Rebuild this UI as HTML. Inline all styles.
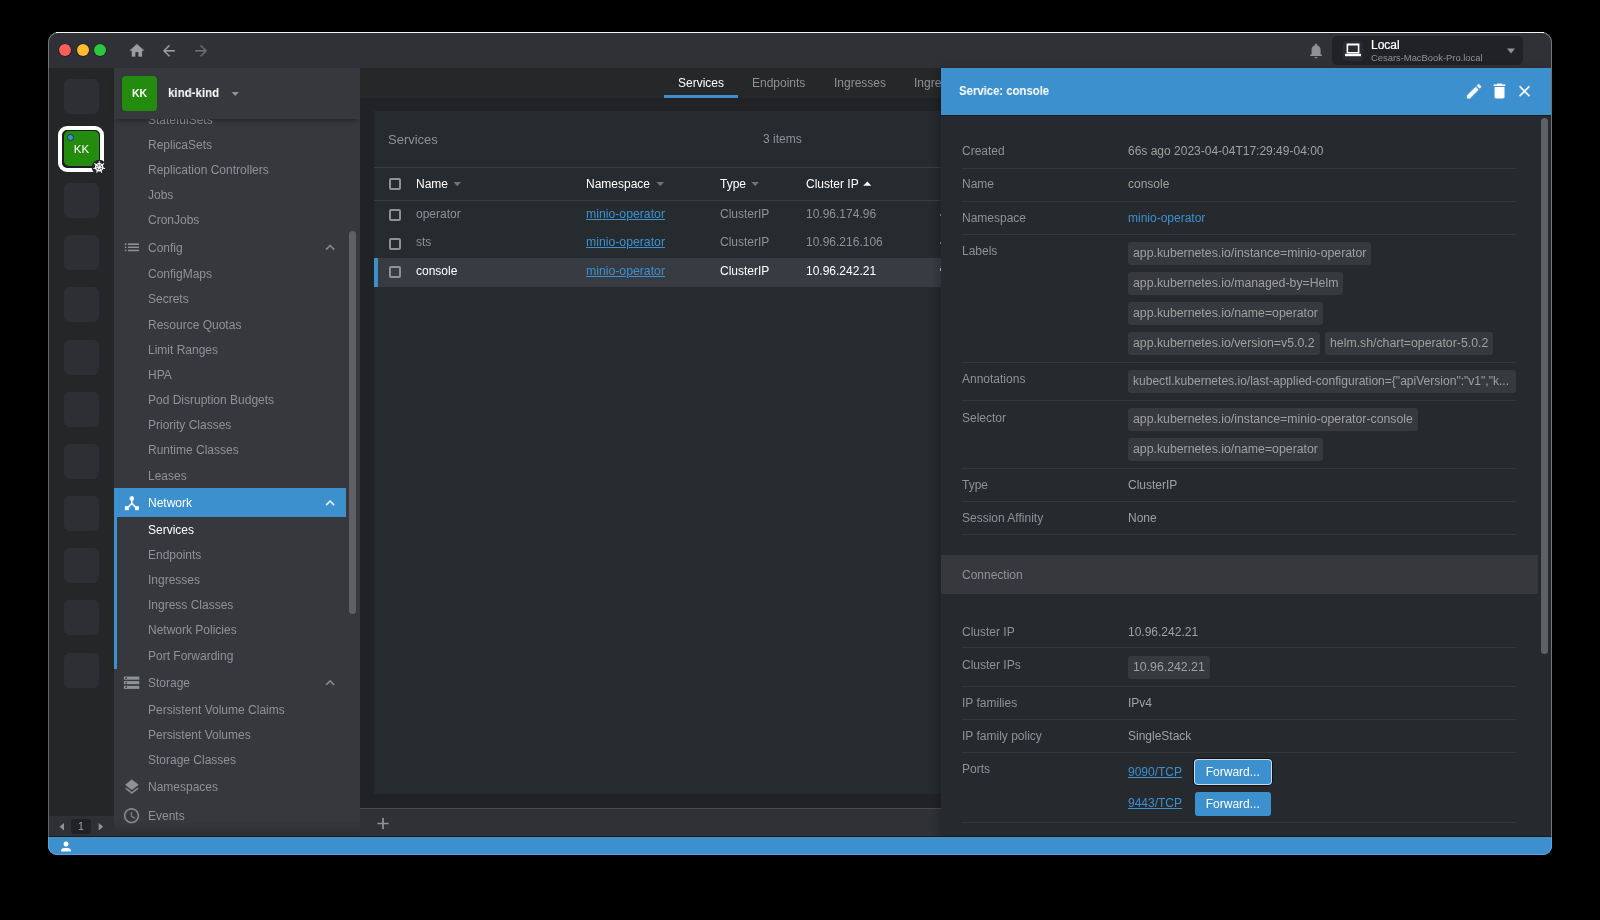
<!DOCTYPE html>
<html><head><meta charset="utf-8">
<style>
*{box-sizing:border-box;margin:0;padding:0}
html,body{width:1600px;height:920px;background:#000;overflow:hidden;font-family:"Liberation Sans",sans-serif;font-size:12px}
.abs{position:absolute}
.t{position:absolute;white-space:nowrap;line-height:14px}
#win{position:absolute;left:48px;top:32px;width:1504px;height:823px;border-radius:10px;overflow:hidden;background:#303136;border:1px solid #5f6166}
#topline{position:absolute;left:56px;top:32px;width:1488px;height:1px;background:#f4f4f4}
/* titlebar */
.tl{position:absolute;top:44px;width:12px;height:12px;border-radius:50%;box-shadow:0 0 0 0.6px rgba(0,20,30,0.6)}
/* hotbar */
#hotbar{position:absolute;left:48px;top:68px;width:66px;height:769px;background:#252628}
.hb{position:absolute;left:64px;width:35px;height:35px;border-radius:6px;background:#2e2f34}
/* sidebar */
#sidebar{position:absolute;left:114px;top:68px;width:246px;height:769px;background:#37383d;overflow:hidden}
.si{position:absolute;left:148px;color:#8e9297;font-size:12px;white-space:nowrap;line-height:14px}
.wh{color:#fff}
.sh{position:absolute;left:148px;color:#8e9297;font-size:12px;white-space:nowrap;line-height:14px}
/* main */
#tabs{position:absolute;left:360px;top:68px;width:600px;height:30px;background:#252729}
#mainbg{position:absolute;left:360px;top:98px;width:600px;height:710px;background:#212225}
#panel{position:absolute;left:374px;top:111px;width:600px;height:683px;background:#262b2f}
#dock{position:absolute;left:360px;top:808px;width:600px;height:29px;background:#303136;border-top:1px solid #46494e}
.tab{position:absolute;top:76px;color:#8e9297;font-size:12px;white-space:nowrap}
.cell{position:absolute;font-size:12px;white-space:nowrap;color:#8e9297;line-height:14px}
.hcell{position:absolute;font-size:12px;white-space:nowrap;color:#fff;line-height:14px}
.cb{position:absolute;left:389px;width:12px;height:12px;border:2px solid #8e9297;border-radius:2px}
.link{color:#3d90ce;text-decoration:underline}
/* drawer */
#drawer{position:absolute;left:941px;top:68px;width:610px;height:769px;background:#262a2e;box-shadow:-4px 0 6px rgba(0,0,0,0.18)}
#dhead{position:absolute;left:941px;top:68px;width:610px;height:47px;background:#3d90ce}
.dl{position:absolute;left:962px;color:#8e9297;font-size:12px;white-space:nowrap;line-height:14px}
.dv{position:absolute;left:1128px;color:#a0a0a0;font-size:12px;white-space:nowrap;line-height:14px}
.sep{position:absolute;left:962px;width:554px;height:1px;background:#30343a}
.chip{position:absolute;height:23px;line-height:23px;padding:0 5px;background:#36393e;border-radius:3px;color:#a0a0a0;font-size:12.3px;white-space:nowrap}
.btn{position:absolute;left:1195px;width:75.5px;height:24px;background:#3d90ce;color:#fff;border-radius:3px;font-size:12px;line-height:24px;text-align:center}
#status{position:absolute;left:48px;top:837px;width:1504px;height:18px;background:#3d90ce;border-radius:0 0 9px 9px}
body *{will-change:transform}
</style></head>
<body>
<div id="win"></div>
<div id="topline"></div>

<!-- traffic lights -->
<div class="tl" style="left:59px;background:#fe5f57"></div>
<div class="tl" style="left:77px;background:#febc2e"></div>
<div class="tl" style="left:94px;background:#28c840"></div>

<div class="abs" style="left:1332px;top:36px;width:191px;height:28.5px;border-radius:5px;background:#212226"></div>
<div class="abs" style="left:1343px;top:40.5px;width:20px;height:20px;border-radius:4px;background:#2a2b30"></div>
<div class="t" style="left:1370.5px;top:37.84px;font-size:12px;color:#fff;font-weight:500;-webkit-text-stroke:0.2px #fff;">Local</div>
<div class="t" style="left:1370.5px;top:51.14px;font-size:9.4px;color:#8e9297;">Cesars-MacBook-Pro.local</div>
<svg class="abs" style="left:1343px;top:40px" width="20" height="20" viewBox="0 0 20 20"><path d="M3.6 3.6h12.8v10H3.6z M5.2 5.4v6.6h9.6V5.4z" fill="#fff" fill-rule="evenodd"/><rect x="2" y="13.8" width="16" height="2.4" fill="#fff"/></svg>
<div id="hotbar"></div>
<div id="sidebar"></div>

<!-- hotbar items -->
<div class="hb" style="top:78.80px"></div>
<div class="hb" style="top:183.12px"></div>
<div class="hb" style="top:235.28px"></div>
<div class="hb" style="top:287.44px"></div>
<div class="hb" style="top:339.60px"></div>
<div class="hb" style="top:391.76px"></div>
<div class="hb" style="top:443.92px"></div>
<div class="hb" style="top:496.08px"></div>
<div class="hb" style="top:548.24px"></div>
<div class="hb" style="top:600.40px"></div>
<div class="hb" style="top:652.56px"></div>
<div class="abs" style="left:58px;top:125.5px;width:46px;height:46px;border-radius:9px;border:4px solid #fff;background:#1c1d20"></div>
<div class="abs" style="left:64px;top:131px;width:35px;height:35px;border-radius:5px;background:#238c0e;color:#fff;font-size:11.5px;line-height:35px;text-align:center;padding-top:1px">KK</div>
<div class="abs" style="left:66.5px;top:134px;width:7px;height:7px;border-radius:50%;background:#3d90ce;border:1px solid #1d3a50"></div>
<!-- pager -->
<div class="abs" style="left:49px;top:816px;width:65px;height:21px;background:#2f3035"></div>
<div class="abs" style="left:71px;top:819px;width:20px;height:15px;border-radius:3px;background:#212226;color:#a0a4a8;font-size:10.5px;line-height:15px;text-align:center">1</div>

<!-- sidebar items -->
<div id="sbitems">
<div class="abs" style="left:114px;top:488px;width:232px;height:29px;background:#3d90ce"></div>
<div class="abs" style="left:114px;top:517px;width:3px;height:152px;background:#3d90ce"></div>
<div class="si" style="top:112.6px">StatefulSets</div>
<div class="si" style="top:137.8px">ReplicaSets</div>
<div class="si" style="top:163.0px">Replication Controllers</div>
<div class="si" style="top:188.2px">Jobs</div>
<div class="si" style="top:213.4px">CronJobs</div>
<div class="si" style="top:240.6px">Config</div>
<div class="si" style="top:267.2px">ConfigMaps</div>
<div class="si" style="top:292.3px">Secrets</div>
<div class="si" style="top:317.5px">Resource Quotas</div>
<div class="si" style="top:342.7px">Limit Ranges</div>
<div class="si" style="top:367.9px">HPA</div>
<div class="si" style="top:393.1px">Pod Disruption Budgets</div>
<div class="si" style="top:418.2px">Priority Classes</div>
<div class="si" style="top:443.4px">Runtime Classes</div>
<div class="si" style="top:468.6px">Leases</div>
<div class="si wh" style="top:495.8px">Network</div>
<div class="si wh" style="top:522.6px">Services</div>
<div class="si" style="top:547.8px">Endpoints</div>
<div class="si" style="top:573.0px">Ingresses</div>
<div class="si" style="top:598.1px">Ingress Classes</div>
<div class="si" style="top:623.3px">Network Policies</div>
<div class="si" style="top:648.5px">Port Forwarding</div>
<div class="si" style="top:675.8px">Storage</div>
<div class="si" style="top:702.5px">Persistent Volume Claims</div>
<div class="si" style="top:727.7px">Persistent Volumes</div>
<div class="si" style="top:752.8px">Storage Classes</div>
<div class="si" style="top:780.0px">Namespaces</div>
<div class="si" style="top:808.6px">Events</div>
<div class="abs" style="left:349px;top:231px;width:7px;height:383px;border-radius:4px;background:#5f6064"></div>
</div>
<div class="abs" style="left:114px;top:822px;width:246px;height:14px;background:linear-gradient(rgba(0,0,0,0),rgba(0,0,0,0.18))"></div>
<!-- sidebar header -->
<div class="abs" style="left:114px;top:68px;width:246px;height:51px;background:#37383d;box-shadow:0 4px 5px -2px rgba(0,0,0,0.3)"></div>
<div class="abs" style="left:122px;top:76px;width:35px;height:35px;border-radius:4px;background:#238c0e;color:#fff;font-weight:bold;font-size:10.5px;line-height:35px;text-align:center">KK</div>
<div class="abs" style="left:167.5px;top:86px;color:#fff;font-weight:bold;font-size:12.8px;line-height:14px;transform:scaleX(0.9);transform-origin:0 0">kind-kind</div>
<div id="tabs"></div>
<div id="mainbg"></div>
<div id="panel"></div>
<div id="dock"></div>
<div class="abs" style="left:664px;top:94.5px;width:74px;height:3px;background:#3d90ce"></div>
<div class="t" style="left:678.4px;top:75.64px;font-size:12px;color:#fff;">Services</div>
<div class="t" style="left:751.9px;top:75.64px;font-size:12px;color:#8e9297;">Endpoints</div>
<div class="t" style="left:834px;top:75.64px;font-size:12px;color:#8e9297;">Ingresses</div>
<div class="t" style="left:914px;top:75.64px;font-size:12px;color:#8e9297;">Ingress Classes</div>
<div class="t" style="left:388px;top:132.50px;font-size:13px;color:#8e9297;">Services</div>
<div class="t" style="left:762.8px;top:131.94px;font-size:12px;color:#8e9297;">3 items</div>
<div class="abs" style="left:374px;top:167px;width:600px;height:1px;background:#383b40"></div>
<div class="abs" style="left:374px;top:200px;width:600px;height:1px;background:#383b40"></div>
<div class="cb" style="top:178px"></div>
<div class="t" style="left:415.6px;top:176.64px;font-size:12px;color:#fff;">Name</div>
<div class="t" style="left:586px;top:176.64px;font-size:12px;color:#fff;">Namespace</div>
<div class="t" style="left:720px;top:176.64px;font-size:12px;color:#fff;">Type</div>
<div class="t" style="left:805.7px;top:176.64px;font-size:12px;color:#fff;">Cluster IP</div>
<div class="abs" style="left:374px;top:258px;width:600px;height:28.5px;background:#383c42"></div>
<div class="abs" style="left:374px;top:258px;width:3.5px;height:28.5px;background:#3d90ce"></div>
<div class="cb" style="top:208.9px"></div>
<div class="t" style="left:415.6px;top:206.74px;font-size:12px;color:#8e9297;">operator</div>
<div class="t" style="left:586px;top:206.66px;font-size:12.25px;color:#3d90ce;text-decoration:underline;">minio-operator</div>
<div class="t" style="left:720px;top:206.74px;font-size:12px;color:#8e9297;">ClusterIP</div>
<div class="t" style="left:805.7px;top:206.74px;font-size:12px;color:#8e9297;">10.96.174.96</div>
<div class="cb" style="top:237.5px"></div>
<div class="t" style="left:415.6px;top:235.34px;font-size:12px;color:#8e9297;">sts</div>
<div class="t" style="left:586px;top:235.26px;font-size:12.25px;color:#3d90ce;text-decoration:underline;">minio-operator</div>
<div class="t" style="left:720px;top:235.34px;font-size:12px;color:#8e9297;">ClusterIP</div>
<div class="t" style="left:805.7px;top:235.34px;font-size:12px;color:#8e9297;">10.96.216.106</div>
<div class="cb" style="top:266.1px"></div>
<div class="t" style="left:415.6px;top:263.94px;font-size:12px;color:#fff;">console</div>
<div class="t" style="left:586px;top:263.86px;font-size:12.25px;color:#3d90ce;text-decoration:underline;">minio-operator</div>
<div class="t" style="left:720px;top:263.94px;font-size:12px;color:#fff;">ClusterIP</div>
<div class="t" style="left:805.7px;top:263.94px;font-size:12px;color:#fff;">10.96.242.21</div>
<div class="abs" style="left:939.5px;top:213.5px;width:1.5px;height:2px;background:#8e9297"></div>
<div class="abs" style="left:939.5px;top:242px;width:1.5px;height:2px;background:#8e9297"></div>
<div class="abs" style="left:939.5px;top:267.5px;width:1.5px;height:3px;background:#ccc"></div>
<div id="drawer"></div>
<div id="dhead"></div>
<div class="abs" style="left:941px;top:115px;width:610px;height:1px;background:#1b1a17"></div>
<div class="t" style="left:958.5px;top:84.2px;font-size:12.4px;color:#fff;font-weight:bold;transform:scaleX(0.915);transform-origin:0 0">Service: console</div>
<div class="t" style="left:961.7px;top:144.44px;font-size:12px;color:#8e9297;">Created</div>
<div class="t" style="left:1128.3px;top:144.44px;font-size:12px;color:#a0a0a0;">66s ago 2023-04-04T17:29:49-04:00</div>
<div class="abs" style="left:962px;top:168px;width:554px;height:1px;background:#33373c"></div>
<div class="t" style="left:961.7px;top:177.24px;font-size:12px;color:#8e9297;">Name</div>
<div class="t" style="left:1128.3px;top:177.24px;font-size:12px;color:#a0a0a0;">console</div>
<div class="abs" style="left:962px;top:201px;width:554px;height:1px;background:#33373c"></div>
<div class="t" style="left:961.7px;top:210.94px;font-size:12px;color:#8e9297;">Namespace</div>
<div class="t" style="left:1128.3px;top:210.94px;font-size:12px;color:#3d90ce;">minio-operator</div>
<div class="abs" style="left:962px;top:234px;width:554px;height:1px;background:#33373c"></div>
<div class="t" style="left:961.7px;top:243.94px;font-size:12px;color:#8e9297;">Labels</div>
<div class="chip" style="left:1128px;top:242px;">app.kubernetes.io/instance=minio-operator</div>
<div class="chip" style="left:1128px;top:272px;">app.kubernetes.io/managed-by=Helm</div>
<div class="chip" style="left:1128px;top:302px;">app.kubernetes.io/name=operator</div>
<div class="chip" style="left:1128px;top:332px;">app.kubernetes.io/version=v5.0.2</div>
<div class="chip" style="left:1325px;top:332px;">helm.sh/chart=operator-5.0.2</div>
<div class="abs" style="left:962px;top:362px;width:554px;height:1px;background:#33373c"></div>
<div class="t" style="left:961.7px;top:371.84px;font-size:12px;color:#8e9297;">Annotations</div>
<div class="chip" style="left:1128px;top:370px;width:388px;overflow:hidden;font-size:12.05px">kubectl.kubernetes.io/last-applied-configuration={"apiVersion":"v1","k...</div>
<div class="abs" style="left:962px;top:400px;width:554px;height:1px;background:#33373c"></div>
<div class="t" style="left:961.7px;top:410.54px;font-size:12px;color:#8e9297;">Selector</div>
<div class="chip" style="left:1128px;top:408px;">app.kubernetes.io/instance=minio-operator-console</div>
<div class="chip" style="left:1128px;top:438px;">app.kubernetes.io/name=operator</div>
<div class="abs" style="left:962px;top:468px;width:554px;height:1px;background:#33373c"></div>
<div class="t" style="left:961.7px;top:478.34px;font-size:12px;color:#8e9297;">Type</div>
<div class="t" style="left:1128.3px;top:478.34px;font-size:12px;color:#a0a0a0;">ClusterIP</div>
<div class="abs" style="left:962px;top:501px;width:554px;height:1px;background:#33373c"></div>
<div class="t" style="left:961.7px;top:510.84px;font-size:12px;color:#8e9297;">Session Affinity</div>
<div class="t" style="left:1128.3px;top:510.84px;font-size:12px;color:#a0a0a0;">None</div>
<div class="abs" style="left:962px;top:534px;width:554px;height:1px;background:#33373c"></div>
<div class="abs" style="left:941px;top:555px;width:597px;height:39px;background:#36383d"></div>
<div class="t" style="left:961.7px;top:567.74px;font-size:12px;color:#8e9297;">Connection</div>
<div class="t" style="left:961.7px;top:624.54px;font-size:12px;color:#8e9297;">Cluster IP</div>
<div class="t" style="left:1128.3px;top:624.54px;font-size:12px;color:#a0a0a0;">10.96.242.21</div>
<div class="abs" style="left:962px;top:647px;width:554px;height:1px;background:#33373c"></div>
<div class="t" style="left:961.7px;top:657.64px;font-size:12px;color:#8e9297;">Cluster IPs</div>
<div class="chip" style="left:1128px;top:655.5px;">10.96.242.21</div>
<div class="abs" style="left:962px;top:686px;width:554px;height:1px;background:#33373c"></div>
<div class="t" style="left:961.7px;top:696.24px;font-size:12px;color:#8e9297;">IP families</div>
<div class="t" style="left:1128.3px;top:696.24px;font-size:12px;color:#a0a0a0;">IPv4</div>
<div class="abs" style="left:962px;top:719px;width:554px;height:1px;background:#33373c"></div>
<div class="t" style="left:961.7px;top:729.34px;font-size:12px;color:#8e9297;">IP family policy</div>
<div class="t" style="left:1128.3px;top:729.34px;font-size:12px;color:#a0a0a0;">SingleStack</div>
<div class="abs" style="left:962px;top:752px;width:554px;height:1px;background:#33373c"></div>
<div class="t" style="left:961.7px;top:762.24px;font-size:12px;color:#8e9297;">Ports</div>
<div class="t" style="left:1128.3px;top:764.84px;font-size:12px;color:#3d90ce;text-decoration:underline;">9090/TCP</div>
<div class="t" style="left:1128.3px;top:796.14px;font-size:12px;color:#3d90ce;text-decoration:underline;">9443/TCP</div>
<div class="btn" style="top:760px;box-shadow:0 0 0 1px #c9def0, 0 0 0 2px #111">Forward...</div>
<div class="btn" style="top:791.5px">Forward...</div>
<div class="abs" style="left:962px;top:822px;width:554px;height:1px;background:#33373c"></div>
<div class="abs" style="left:1540.5px;top:118px;width:6.5px;height:536px;border-radius:4px;background:#5f6064"></div>
<div class="abs" style="left:48px;top:836px;width:1504px;height:1px;background:#1f1a12"></div>
<div id="status"></div>

<svg class="abs" style="left:0;top:0" width="1600" height="920" viewBox="0 0 1600 920">
<path transform="translate(127.90 41.67) scale(0.75)" d="M10 20v-6h4v6h5v-8h3L12 3 2 12h3v8z" fill="#9a9ca1" />
<path transform="translate(159.90 41.80) scale(0.75)" d="M20 11H7.83l5.59-5.59L12 4l-8 8 8 8 1.41-1.41L7.83 13H20v-2z" fill="#9a9ca1" />
<path transform="translate(192.10 41.80) scale(0.75)" d="M12 4l-1.41 1.41L16.17 11H4v2h12.17l-5.58 5.59L12 20l8-8z" fill="#6b6d72" />
<path transform="translate(1307.00 41.81) scale(0.75)" d="M12 22c1.1 0 2-.9 2-2h-4c0 1.1.89 2 2 2zm6-6v-5c0-3.07-1.64-5.64-4.5-6.32V4c0-.83-.67-1.5-1.5-1.5s-1.5.67-1.5 1.5v.68C7.63 5.36 6 7.92 6 11v5l-2 2v1h16v-1l-2-2z" fill="#8e9297" />
<path transform="translate(122.54 237.94) scale(0.78)" d="M3 13h2v-2H3v2zm0 4h2v-2H3v2zm0-8h2V7H3v2zm4 4h14v-2H7v2zm0 4h14v-2H7v2zM7 7v2h14V7H7z" fill="#8e9297" />
<path transform="translate(122.49 493.74) scale(0.78)" d="M17 16l-4-4V8.82C14.16 8.4 15 7.3 15 6c0-1.66-1.34-3-3-3S9 4.34 9 6c0 1.3.84 2.4 2 2.82V12l-4 4H3v5h5v-3.05l4-4.2 4 4.2V21h5v-5h-4z" fill="#fff" />
<path transform="translate(122.36 673.46) scale(0.77)" d="M2 20h20v-4H2v4zm2-3h2v2H4v-2zM2 4v4h20V4H2zm4 3H4V5h2v2zm-4 7h20v-4H2v4zm2-3h2v2H4v-2z" fill="#8e9297" />
<path transform="translate(122.73 777.91) scale(0.76)" d="M11.99 18.54l-7.37-5.73L3 14.07l9 7 9-7-1.63-1.27-7.38 5.74zM12 16l7.36-5.73L21 9l-9-7-9 7 1.63 1.27L12 16z" fill="#8e9297" />
<path transform="translate(122.38 806.53) scale(0.76)" d="M11.99 2C6.47 2 2 6.48 2 12s4.47 10 9.99 10C17.52 22 22 17.52 22 12S17.52 2 11.99 2zM12 20c-4.42 0-8-3.58-8-8s3.58-8 8-8 8 3.58 8 8-3.58 8-8 8zm.5-13H11v6l5.25 3.15.75-1.23-4.5-2.67z" fill="#8e9297" />
<path transform="translate(321.10 238.42) scale(0.75)" d="M12 8l-6 6 1.41 1.41L12 10.83l4.59 4.58L18 14z" fill="#8e9297" />
<path transform="translate(321.10 494.03) scale(0.75)" d="M12 8l-6 6 1.41 1.41L12 10.83l4.59 4.58L18 14z" fill="#fff" />
<path transform="translate(321.10 673.83) scale(0.75)" d="M12 8l-6 6 1.41 1.41L12 10.83l4.59 4.58L18 14z" fill="#8e9297" />
<path transform="translate(1464.50 81.70) scale(0.8)" d="M3 17.25V21h3.75L17.81 9.94l-3.75-3.75L3 17.25zM20.71 7.04c.39-.39.39-1.02 0-1.41l-2.34-2.34c-.39-.39-1.02-.39-1.41 0l-1.83 1.83 3.75 3.75 1.83-1.83z" fill="#fff" />
<path transform="translate(1489.54 81.04) scale(0.83)" d="M6 19c0 1.1.9 2 2 2h8c1.1 0 2-.9 2-2V7H6v12zM19 4h-3.5l-1-1h-5l-1 1H5v2h14V4z" fill="#fff" />
<path transform="translate(1515.02 81.72) scale(0.79)" d="M19 6.41L17.59 5 12 10.59 6.41 5 5 6.41 10.59 12 5 17.59 6.41 19 12 13.41 17.59 19 19 17.59 13.41 12z" fill="#fff" />
<path transform="translate(58.56 839.06) scale(0.62)" d="M12 12c2.21 0 4-1.79 4-4s-1.79-4-4-4-4 1.79-4 4 1.79 4 4 4zm0 2c-2.67 0-8 1.34-8 4v2h16v-2c0-2.66-5.33-4-8-4z" fill="#fff" />
<path transform="translate(373.40 813.90) scale(0.8)" d="M19 13h-6v6h-2v-6H5v-2h6V5h2v6h6v2z" fill="#8e9297" />
<polygon points="231.5,92 239,92 235.25,96" fill="#8e9297"/>
<polygon points="1507,48.5 1515,48.5 1511,53.5" fill="#8e9297"/>
<polygon points="64,823 64,830.5 59.5,826.75" fill="#8e9297"/>
<polygon points="98.7,823 98.7,830.5 103.2,826.75" fill="#8e9297"/>
<polygon points="453.5,182 461,182 457.25,186.2" fill="#6e7176"/>
<polygon points="656.5,182 664,182 660.25,186.2" fill="#6e7176"/>
<polygon points="751.4,182 758.9,182 755.15,186.2" fill="#6e7176"/>
<polygon points="863.2,185.8 871.3,185.8 867.25,181.6" fill="#fff"/>
<circle cx="99.2" cy="167.2" r="7.5" fill="#25262a"/>
<circle cx="99.2" cy="167.2" r="3.6" fill="none" stroke="#fff" stroke-width="1.4"/>
<circle cx="99.2" cy="167.2" r="1" fill="#fff"/>
<line x1="99.20" y1="166.00" x2="99.20" y2="161.60" stroke="#fff" stroke-width="1.1" stroke-linecap="round"/>
<line x1="100.14" y1="166.45" x2="103.58" y2="163.71" stroke="#fff" stroke-width="1.1" stroke-linecap="round"/>
<line x1="100.37" y1="167.47" x2="104.66" y2="168.45" stroke="#fff" stroke-width="1.1" stroke-linecap="round"/>
<line x1="99.72" y1="168.28" x2="101.63" y2="172.25" stroke="#fff" stroke-width="1.1" stroke-linecap="round"/>
<line x1="98.68" y1="168.28" x2="96.77" y2="172.25" stroke="#fff" stroke-width="1.1" stroke-linecap="round"/>
<line x1="98.03" y1="167.47" x2="93.74" y2="168.45" stroke="#fff" stroke-width="1.1" stroke-linecap="round"/>
<line x1="98.26" y1="166.45" x2="94.82" y2="163.71" stroke="#fff" stroke-width="1.1" stroke-linecap="round"/>
</svg>
<div class="abs" style="left:48px;top:32px;width:1504px;height:805px;border-radius:10px 10px 0 0;border:1.5px solid rgba(120,123,128,0.75);border-bottom:0;pointer-events:none"></div>
<div class="abs" style="left:48px;top:837px;width:1504px;height:18px;border-radius:0 0 9px 9px;border:1px solid #5aa5e0;border-top:0;pointer-events:none"></div>
<div id="topline2" class="abs" style="left:56px;top:32px;width:1488px;height:1px;background:#f4f4f4"></div>
</body></html>
